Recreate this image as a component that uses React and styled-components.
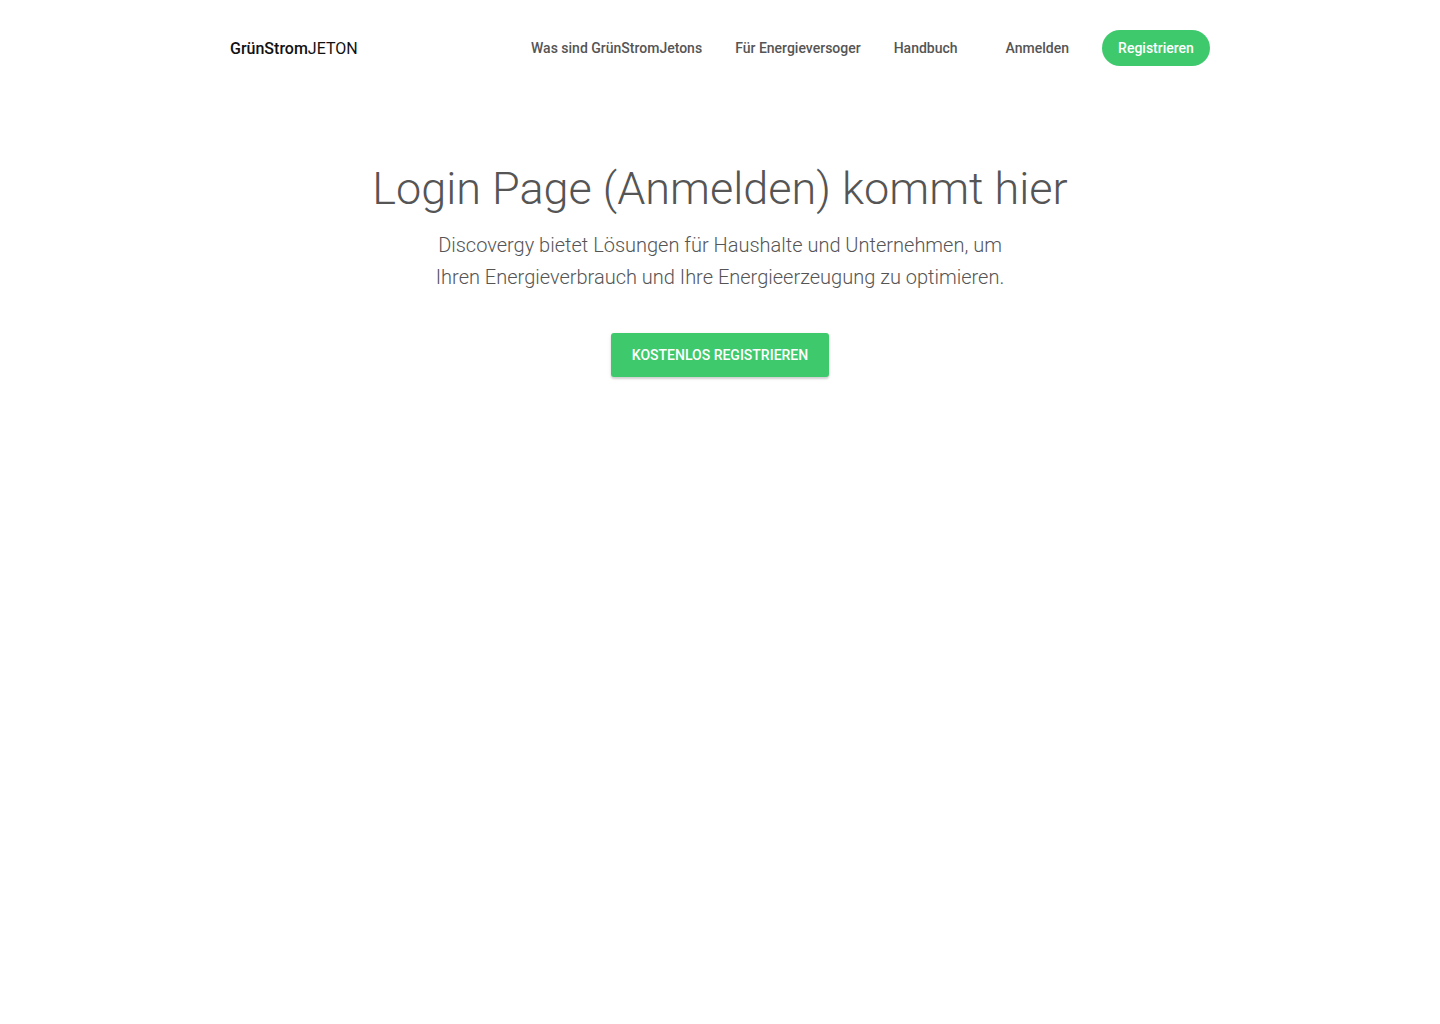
import React from "react";
import styled, { createGlobalStyle } from "styled-components";

const Global = createGlobalStyle`
  html, body { margin: 0; padding: 0; background: #fff; }
  body { font-family: Roboto, "Noto Sans", Arial, sans-serif; color: #555; -webkit-font-smoothing: antialiased; }
  * { box-sizing: border-box; }
`;

const Page = styled.div`
  width: 100%;
  min-height: 1024px;
  background: #fff;
`;

const Header = styled.header`
  width: 980px;
  margin: 0 auto;
  height: 96px;
  display: flex;
  align-items: center;
  justify-content: space-between;
`;

const Logo = styled.a`
  font-size: 16px;
  color: #111;
  text-decoration: none;
  b { font-weight: 500; }
  span { font-weight: 400; }
`;

const Nav = styled.nav`
  display: flex;
  align-items: center;
  gap: 33px;
`;

const NavLink = styled.a`
  font-size: 14px;
  font-weight: 500;
  color: #555;
  text-decoration: none;
  margin-left: ${(p) => (p.$spaced ? "15px" : "0")};
`;

const Pill = styled.a`
  display: inline-flex;
  align-items: center;
  justify-content: center;
  width: 108px;
  height: 36px;
  border-radius: 18px;
  background: #3ec96d;
  color: #fff;
  font-size: 14px;
  font-weight: 500;
  text-decoration: none;
`;

const Hero = styled.section`
  display: flex;
  flex-direction: column;
  align-items: center;
  text-align: center;
  padding-top: 63px;
`;

const Title = styled.h1`
  margin: 0;
  font-size: 45px;
  font-weight: 300;
  line-height: 60px;
  color: #555;
`;

const Lead = styled.p`
  margin: 10px 0 0;
  font-size: 20px;
  font-weight: 300;
  line-height: 32px;
  color: #555;
`;

const CTA = styled.a`
  margin-top: 40px;
  display: inline-flex;
  align-items: center;
  justify-content: center;
  width: 218px;
  height: 44px;
  border-radius: 3px;
  background: #3ec96d;
  color: #fff;
  font-size: 14px;
  font-weight: 500;
  text-transform: uppercase;
  text-decoration: none;
  box-shadow: 0 2px 2px rgba(0, 0, 0, 0.14), 0 1px 4px rgba(0, 0, 0, 0.08);
`;

export default function App() {
  return (
    <Page>
      <Global />
      <Header>
        <Logo href="#">
          <b>GrünStrom</b>
          <span>JETON</span>
        </Logo>
        <Nav>
          <NavLink href="#">Was sind GrünStromJetons</NavLink>
          <NavLink href="#">Für Energieversoger</NavLink>
          <NavLink href="#">Handbuch</NavLink>
          <NavLink href="#" $spaced>Anmelden</NavLink>
          <Pill href="#">Registrieren</Pill>
        </Nav>
      </Header>
      <Hero>
        <Title>Login Page (Anmelden) kommt hier</Title>
        <Lead>
          Discovergy bietet Lösungen für Haushalte und Unternehmen, um
          <br />
          Ihren Energieverbrauch und Ihre Energieerzeugung zu optimieren.
        </Lead>
        <CTA href="#">Kostenlos registrieren</CTA>
      </Hero>
    </Page>
  );
}
